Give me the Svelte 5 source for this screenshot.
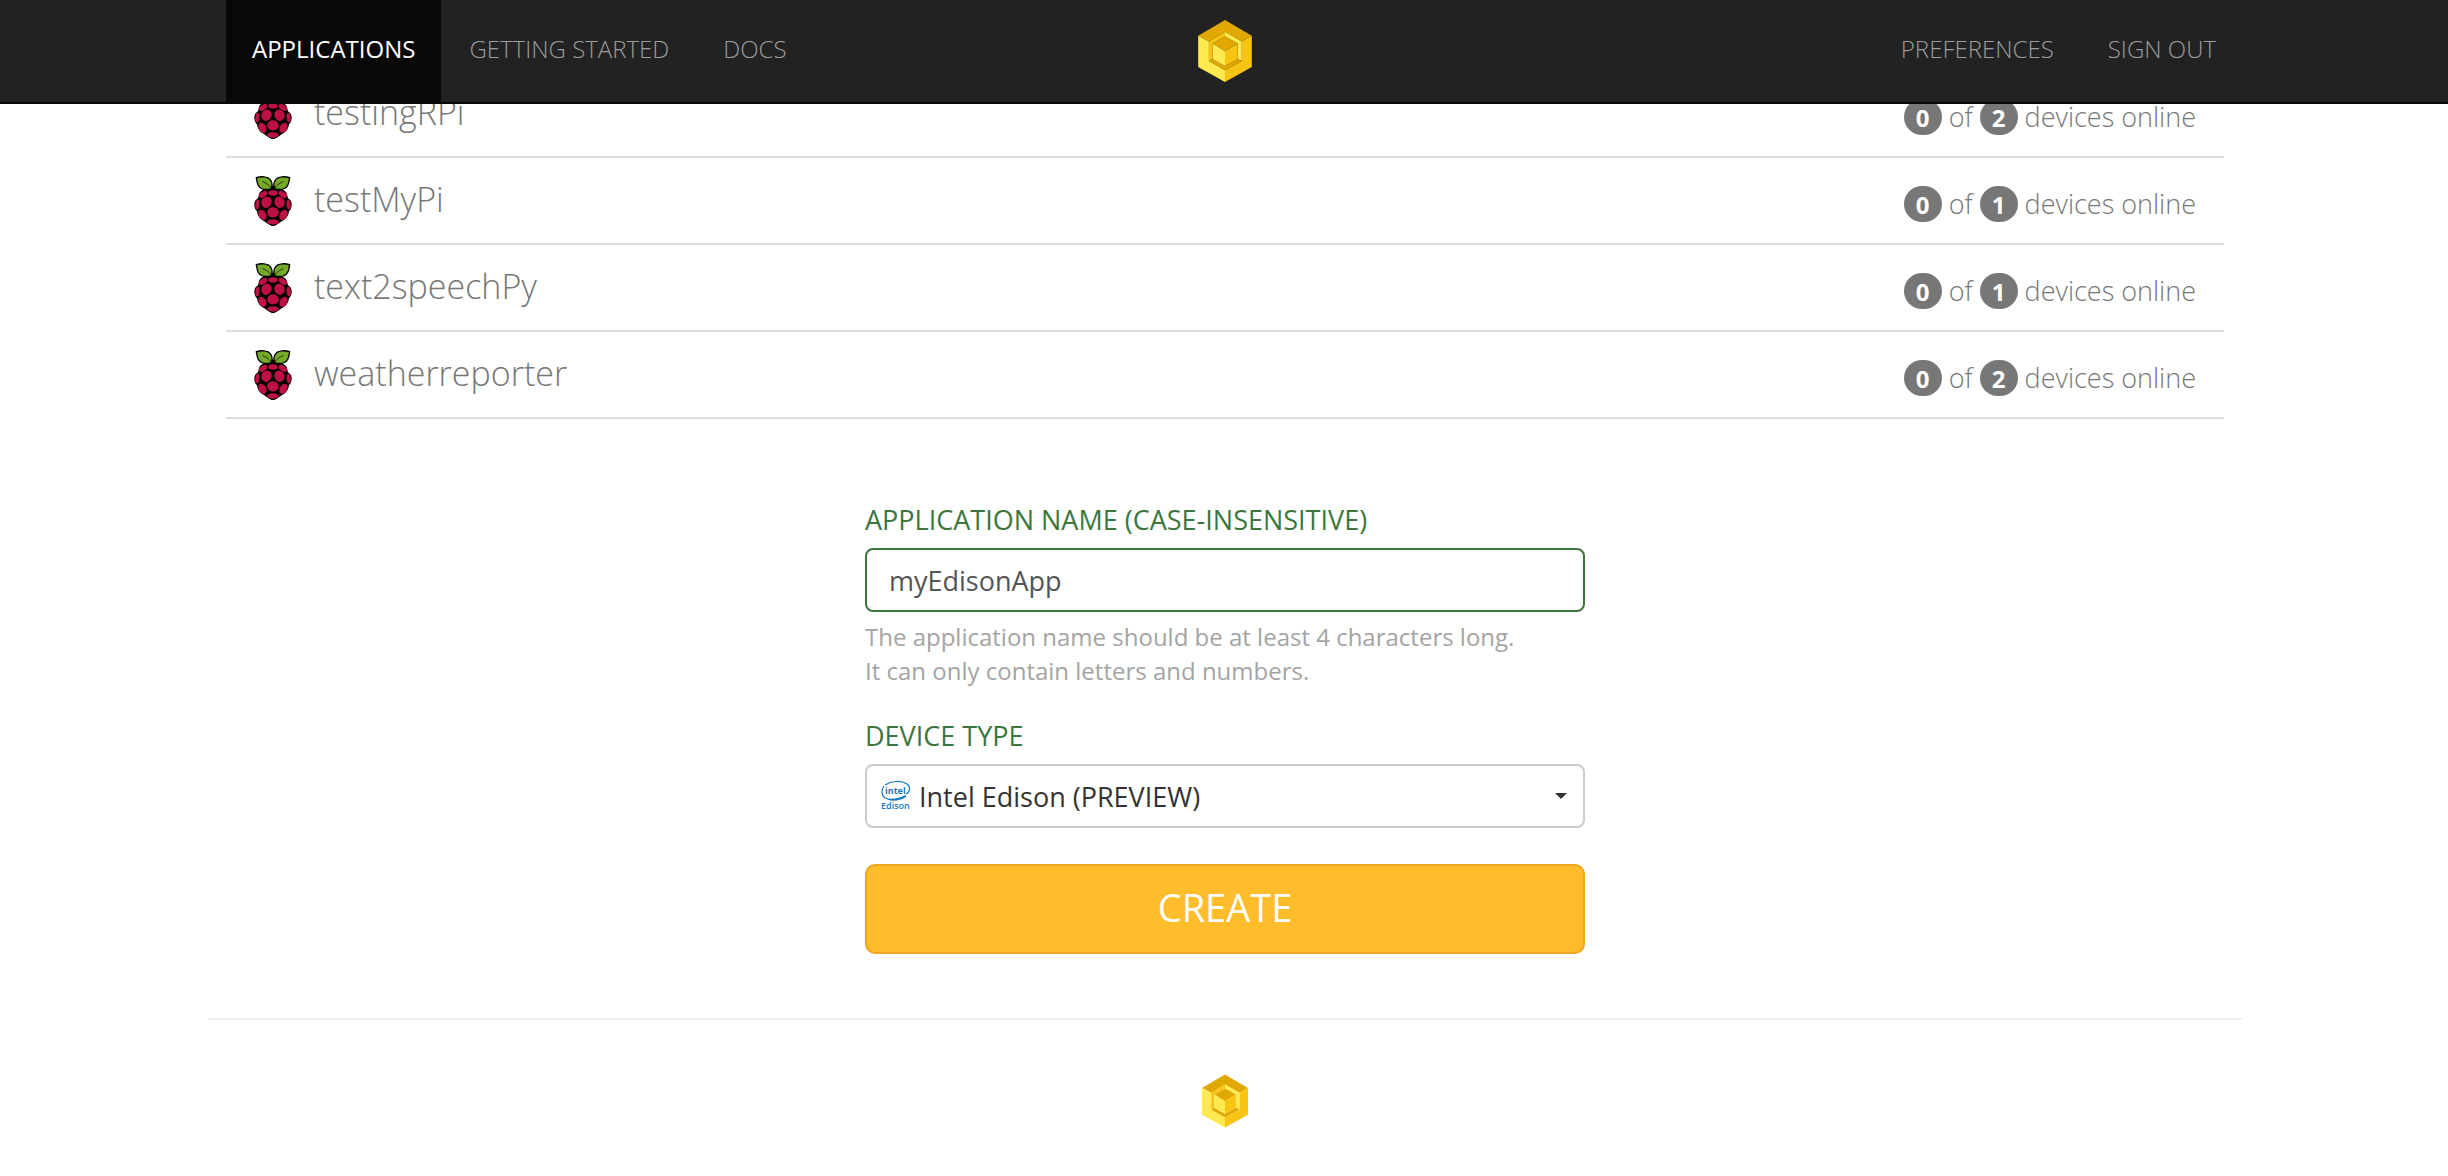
<script>
  const apps = [
    { name: 'testingRPi', online: 0, total: 2 },
    { name: 'testMyPi', online: 0, total: 1 },
    { name: 'text2speechPy', online: 0, total: 1 },
    { name: 'weatherreporter', online: 0, total: 2 }
  ];
  let appName = $state('myEdisonApp');
  let deviceType = $state('edison');
</script>

{#snippet cube()}
  <svg class="cube" viewBox="0 0 160 185" aria-hidden="true">
    <path fill="#e0a800" d="M80 0 160 47 130 64 80 35 32 64 0 47Z" />
    <path fill="#ffe94e" d="M0 47 32 64V122L80 150V185L0 140Z" />
    <path fill="#f8c414" d="M160 47 130 64V122L80 150V185L160 140Z" />
    <path fill="#f8c414" d="M80 35 32 64V122L43 116V70L80 49Z" />
    <path fill="#ffe94e" d="M80 35 130 64V122L118 116V70L80 49Z" />
    <path fill="#e0a800" d="M32 122 43 116 80 137 118 116 130 122 80 150Z" />
    <path fill="#e0a800" d="M80 49 118 70 80 93 43 70Z" />
    <path fill="#ffe94e" d="M43 70 80 93V137L43 116Z" />
    <path fill="#f8c414" d="M118 70 80 93V137L118 116Z" />
  </svg>
{/snippet}

{#snippet raspberry()}
  <svg class="berry" viewBox="0 0 110 147" aria-hidden="true">
    <path d="M55 28C66 34 88 36 96 52 98 60 98 64 100 66 108 70 110 78 110 84 110 94 106 100 102 104 100 120 92 128 82 132 72 138 64 147 55 147S38 138 28 132C18 128 10 120 8 104 4 100 0 94 0 84 0 78 2 70 10 66 12 64 12 60 14 52 22 36 44 34 55 28Z" />
    <g fill="#75a928" stroke="#000" stroke-width="4" stroke-linejoin="round">
      <path d="M6 5C18 1 40 0 48 12 55 22 52 34 49 38 32 42 18 38 12 28 7 20 8 12 6 5Z" />
      <path d="M104 5C92 1 70 0 62 12 55 22 58 34 61 38 78 42 92 38 98 28 103 20 102 12 104 5Z" />
      <path fill="none" stroke-width="2" d="M24 16C34 20 44 27 50 35M86 16C76 20 66 27 60 35" />
    </g>
    <g fill="#bc1142">
      <ellipse cx="55" cy="50" rx="14" ry="8" />
      <ellipse cx="26" cy="54" rx="14" ry="8" transform="rotate(-35 26 54)" />
      <ellipse cx="84" cy="54" rx="14" ry="8" transform="rotate(35 84 54)" />
      <ellipse cx="36" cy="77" rx="15" ry="17" transform="rotate(25 36 77)" />
      <ellipse cx="74" cy="77" rx="15" ry="17" transform="rotate(-25 74 77)" />
      <ellipse cx="9" cy="84" rx="6" ry="14" transform="rotate(5 9 84)" />
      <ellipse cx="101" cy="84" rx="6" ry="14" transform="rotate(-5 101 84)" />
      <ellipse cx="55" cy="107" rx="17" ry="15" />
      <ellipse cx="24" cy="114" rx="11" ry="16" transform="rotate(-28 24 114)" />
      <ellipse cx="86" cy="114" rx="11" ry="16" transform="rotate(28 86 114)" />
      <ellipse cx="55" cy="135" rx="17" ry="8" />
    </g>
  </svg>
{/snippet}

<header>
  <div class="container bar">
    <nav class="links">
      <a class="active" href="#applications">APPLICATIONS</a>
      <a href="#start">GETTING STARTED</a>
      <a href="#docs">DOCS</a>
    </nav>
    <a class="brand" href="#home" aria-label="Home">{@render cube()}</a>
    <nav class="links end">
      <a href="#preferences">PREFERENCES</a>
      <a href="#signout">SIGN OUT</a>
    </nav>
  </div>
</header>

<main>
  <div class="container">
    <ul>
      {#each apps as app}
        <li>
          {@render raspberry()}
          <a class="name" href="#{app.name}">{app.name}</a>
          <span class="status">
            <span class="badge">{app.online}</span>
            <span>of</span>
            <span class="badge">{app.total}</span>
            <span>devices online</span>
          </span>
        </li>
      {/each}
    </ul>

    <form onsubmit={(e) => e.preventDefault()}>
      <label for="app-name">APPLICATION NAME (CASE-INSENSITIVE)</label>
      <input id="app-name" type="text" bind:value={appName} />
      <p>The application name should be at least 4 characters long.<br />It can only contain letters and numbers.</p>
      <label for="device-type">DEVICE TYPE</label>
      <div class="select">
        <svg class="edison" viewBox="0 0 30 30" aria-hidden="true">
          <path fill="none" stroke="#1777bd" stroke-width="1.2" d="M4 4C10 0 20-1 26 3 30 6 29 11 25 13" />
          <path fill="none" stroke="#1777bd" stroke-width="1.2" d="M3 5C0 9 0 14 4 17" />
          <path fill="#1777bd" d="M3 16C8 19 17 18 25 14L25 16C17 21 7 21 3 16Z" />
          <text x="4" y="13" font-size="9" font-weight="700">intel</text>
          <text x="0" y="28" font-size="9" font-weight="600">Edison</text>
        </svg>
        <select id="device-type" bind:value={deviceType}>
          <option value="edison">Intel Edison (PREVIEW)</option>
          <option value="rpi">Raspberry Pi</option>
        </select>
        <svg class="caret" viewBox="0 0 12 6" aria-hidden="true"><path fill="#333" d="M0 0H12L6 6Z" /></svg>
      </div>
      <button type="submit">CREATE</button>
    </form>
  </div>
</main>

<footer>{@render cube()}</footer>

<style>
  :global(body) {
    padding-left: 2px;
    background: #fff;
    color: #777;
    font-family: 'Open Sans', 'Liberation Sans', sans-serif;
    font-size: 24px;
  }
  .container {
    box-sizing: border-box;
    max-width: 2034px;
    margin: 0 auto;
    padding: 0 18px;
  }
  a {
    color: inherit;
    text-decoration: none;
  }
  header {
    position: absolute;
    top: 0;
    left: 0;
    right: 0;
    padding-left: 2px;
    background: #222;
    border-bottom: 2px solid #080808;
  }
  .bar {
    display: grid;
    grid-template-columns: 1fr auto 1fr;
    align-items: center;
  }
  .links {
    display: flex;
    gap: 2px;
  }
  .links a {
    padding: 0 26px 4px;
    font-weight: 300;
    line-height: 98px;
    color: #9d9d9d;
  }
  .links a.active {
    background: #080808;
    color: #fff;
    font-weight: 400;
  }
  .end {
    justify-content: flex-end;
    margin-right: -18px;
  }
  .cube {
    display: block;
    width: 54px;
    height: 62px;
  }
  main {
    padding-top: 71px;
  }
  ul {
    list-style: none;
    margin: 0;
    padding: 0;
  }
  li {
    display: flex;
    align-items: center;
    box-sizing: border-box;
    height: 87px;
    padding: 0 28px;
    border-bottom: 2px solid #ddd;
  }
  .berry {
    width: 38px;
    height: 50px;
    margin-right: 22px;
  }
  .name {
    flex: 1;
    padding-bottom: 4px;
    font-size: 34px;
    line-height: 48px;
    font-weight: 300;
  }
  .status {
    display: flex;
    align-items: center;
    gap: 7px;
    padding-top: 6px;
    font-size: 27px;
    line-height: 36px;
    font-weight: 300;
  }
  .badge {
    width: 38px;
    height: 36px;
    border-radius: 18px;
    background: #777;
    color: #fff;
    font-size: 24px;
    line-height: 38px;
    font-weight: 700;
    text-align: center;
  }
  form {
    display: flex;
    flex-direction: column;
    max-width: 720px;
    margin: 81px auto 0;
  }
  label {
    margin-bottom: 8px;
    color: #3c763d;
    font-size: 27px;
    line-height: 40px;
  }
  input,
  .select {
    box-sizing: border-box;
    height: 64px;
    border: 2px solid #3c763d;
    border-radius: 8px;
    background: #fff;
  }
  input {
    padding: 0 22px;
    color: #555;
    font: inherit;
    font-size: 27px;
  }
  p {
    margin: 8px 0 28px;
    color: #a4a4a4;
    font-weight: 500;
    line-height: 34px;
  }
  .select {
    display: flex;
    align-items: center;
    padding: 0 16px 0 14px;
    border-color: #ccc;
  }
  .edison {
    width: 30px;
    height: 30px;
    margin-right: 8px;
    overflow: visible;
    fill: #1777bd;
  }
  select {
    flex: 1;
    height: 60px;
    padding: 0;
    border: 0;
    appearance: none;
    background: none;
    color: #333;
    font: inherit;
    font-size: 27px;
  }
  .caret {
    width: 12px;
    height: 6px;
  }
  button {
    height: 90px;
    margin-top: 36px;
    padding: 0 0 4px;
    border: 2px solid #eea71f;
    border-radius: 10px;
    background: #ffbc2b;
    color: #fff;
    font: inherit;
    font-size: 38px;
  }
  footer {
    display: flex;
    justify-content: center;
    max-width: 2034px;
    margin: 64px auto 0;
    padding: 54px 0 48px;
    border-top: 2px solid #eee;
  }
  footer .cube {
    width: 46px;
    height: 54px;
  }
</style>
